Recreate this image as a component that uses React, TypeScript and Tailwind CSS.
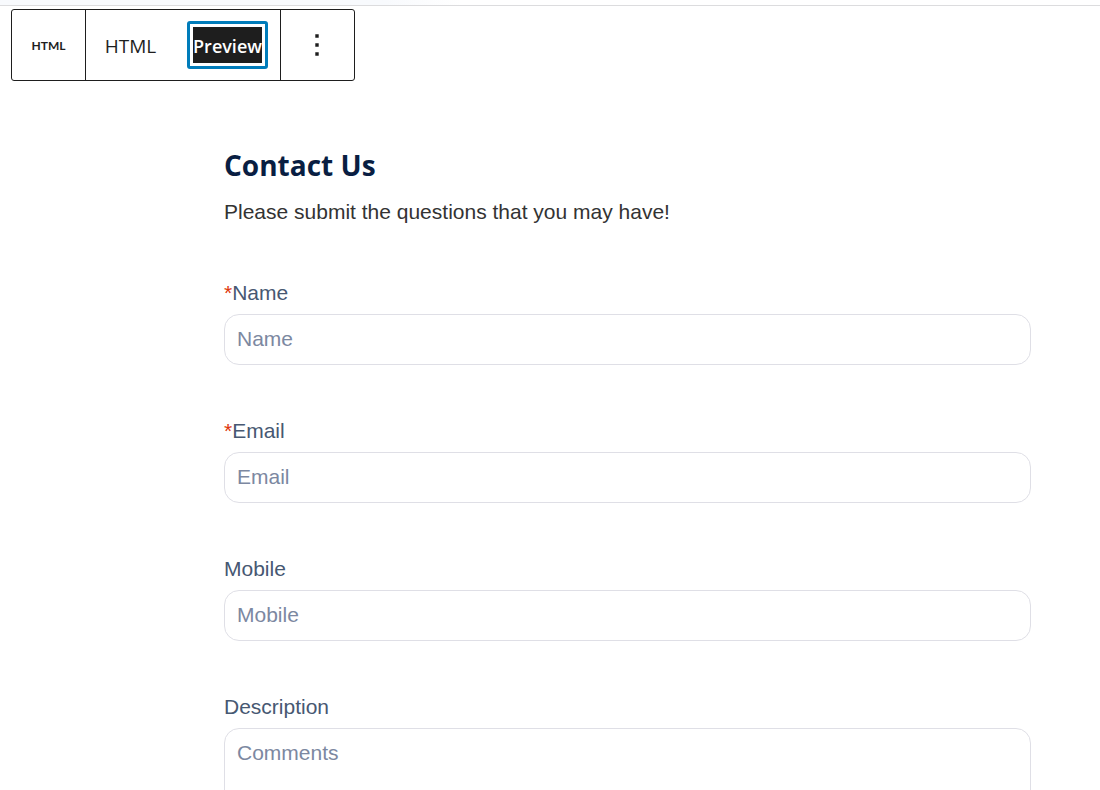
import type { ReactNode } from "react";

const boxClass =
  "block w-full rounded-[15px] border border-[#dfdfe6] bg-white px-3 text-[21px] leading-6 text-[#475872] placeholder:text-[#7c88a1] placeholder:opacity-100 outline-none";

function Field({
  id,
  label,
  required,
  children,
}: {
  id: string;
  label: string;
  required?: boolean;
  children: ReactNode;
}) {
  return (
    <div>
      <label htmlFor={id} className="mb-[7px] block text-[21px] leading-7 text-[#475872]">
        {required && <span className="text-[#de350b]">*</span>}
        {label}
      </label>
      {children}
    </div>
  );
}

function Toolbar() {
  return (
    <div
      role="toolbar"
      aria-label="Block tools"
      className="ml-[11px] mt-[3px] flex h-18 w-[344px] rounded-[3px] border border-[#1e1e1e] bg-white font-['Open_Sans','Noto_Sans',sans-serif] text-[19px] text-[#1e1e1e]"
    >
      <button
        type="button"
        aria-label="HTML block"
        className="flex w-[74px] items-center justify-center border-r border-[#1e1e1e] pt-0.5 font-['Lato',sans-serif] text-[12px] font-bold"
      >
        HTML
      </button>
      <div className="flex flex-1 items-center border-r border-[#1e1e1e]">
        <button type="button" className="h-12 w-[89px] pt-0.5 text-center font-medium">
          HTML
        </button>
        <button
          type="button"
          aria-pressed="true"
          className="ml-3 flex h-12 w-[81px] items-center justify-center rounded-[3px] border-3 border-[#007cba] bg-white p-[3px] text-[18px] font-semibold text-white"
        >
          <span className="flex h-9 w-full items-center justify-center bg-[#1e1e1e] pt-0.5">Preview</span>
        </button>
      </div>
      <button type="button" aria-label="Options" className="flex w-[73px] items-center justify-center pr-0.5">
        <svg width="36" height="36" viewBox="0 0 36 36" fill="currentColor" aria-hidden="true">
          <path d="M16.3 7.3h3.4v3.4h-3.4zM16.3 16.3h3.4v3.4h-3.4zM16.3 25.3h3.4v3.4h-3.4z" />
        </svg>
      </button>
    </div>
  );
}

export default function App() {
  return (
    <div className="h-screen overflow-hidden bg-white font-['Liberation_Sans',Arial,sans-serif]">
      <div className="h-1.5 border-b border-[#dcdcde] bg-linear-to-r from-[#f8fafd] from-35% to-white to-42%" />
      <Toolbar />
      <main className="pl-56 pr-[69px] pt-[66px]">
        <h1 className="font-['Open_Sans','Noto_Sans',sans-serif] text-[28px] font-bold leading-9 text-[#091e42]">
          Contact Us
        </h1>
        <p className="mt-[15px] text-[21px] leading-7 text-[#333333]">
          Please submit the questions that you may have!
        </p>
        <form className="mt-[53px] flex flex-col gap-[52px]">
          <Field id="name" label="Name" required>
            <input id="name" type="text" required placeholder="Name" className={`${boxClass} h-[51px] pb-0.5`} />
          </Field>
          <Field id="email" label="Email" required>
            <input id="email" type="email" required placeholder="Email" className={`${boxClass} h-[51px] pb-0.5`} />
          </Field>
          <Field id="mobile" label="Mobile">
            <input id="mobile" type="tel" placeholder="Mobile" className={`${boxClass} h-[51px] pb-0.5`} />
          </Field>
          <Field id="description" label="Description">
            <textarea
              id="description"
              placeholder="Comments"
              className={`${boxClass} h-40 resize-none py-3`}
            />
          </Field>
        </form>
      </main>
    </div>
  );
}
